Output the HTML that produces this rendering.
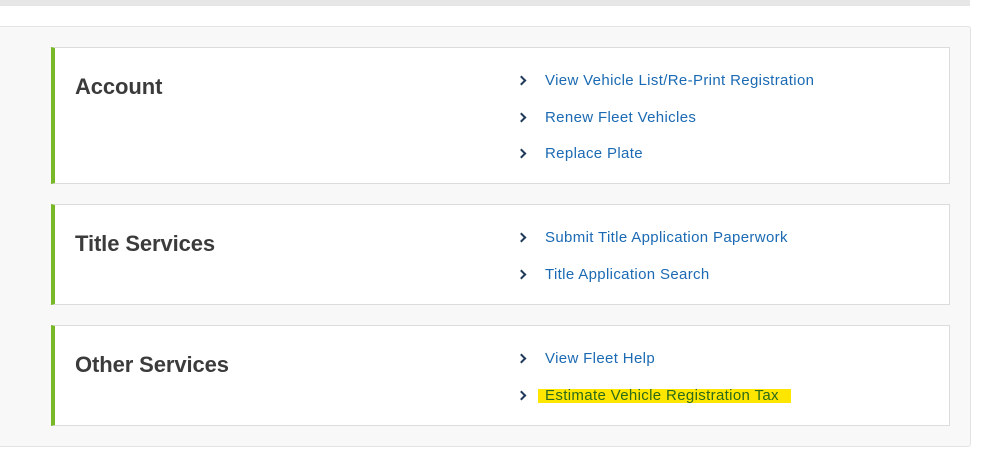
<!DOCTYPE html>
<html><head><style>
body{margin:0;width:996px;height:464px;background:#fff;font-family:"Liberation Sans",sans-serif;position:relative;overflow:hidden}
.top{position:absolute;left:0;top:0;width:970px;height:6px;background:#e6e6e6}
.panel{position:absolute;left:-2px;top:26px;width:971px;height:419px;background:#f8f8f8;border:1px solid #e4e4e4;border-radius:3px}
.card{position:absolute;left:51px;width:899px;background:#fff;border:1px solid #dcdcdc;border-left:4px solid #78b829;box-sizing:border-box}
.card h2{position:absolute;left:20px;margin:0;font-size:22px;font-weight:bold;color:#3b3b3b;letter-spacing:-0.1px}
.links{position:absolute;left:462px;margin:0;padding:0;list-style:none}
.links li{height:36.5px;position:relative;font-size:15px;letter-spacing:0.35px;color:#1b6ab3;line-height:20px;padding-left:28px;white-space:nowrap}
.links li:before{content:"";position:absolute;left:1px;top:6px;width:5px;height:5px;border-right:2px solid #1f3a5a;border-top:2px solid #1f3a5a;transform:rotate(45deg)}
.hl{background:#ffe600;color:#2a6a1a;padding:0 12px 0 7px;margin-left:-7px;line-height:14px;display:inline-block}
</style></head><body>
<div class="top"></div>
<div class="panel"></div>
<div class="card" style="top:47px;height:137px"><h2 style="top:26px">Account</h2>
<ul class="links" style="top:23px"><li>View Vehicle List/Re-Print Registration</li><li>Renew Fleet Vehicles</li><li>Replace Plate</li></ul></div>
<div class="card" style="top:204px;height:101px"><h2 style="top:26px">Title Services</h2>
<ul class="links" style="top:23px"><li>Submit Title Application Paperwork</li><li>Title Application Search</li></ul></div>
<div class="card" style="top:325px;height:101px"><h2 style="top:26px">Other Services</h2>
<ul class="links" style="top:23px"><li>View Fleet Help</li><li><span class="hl">Estimate Vehicle Registration Tax</span></li></ul></div>
</body></html>
